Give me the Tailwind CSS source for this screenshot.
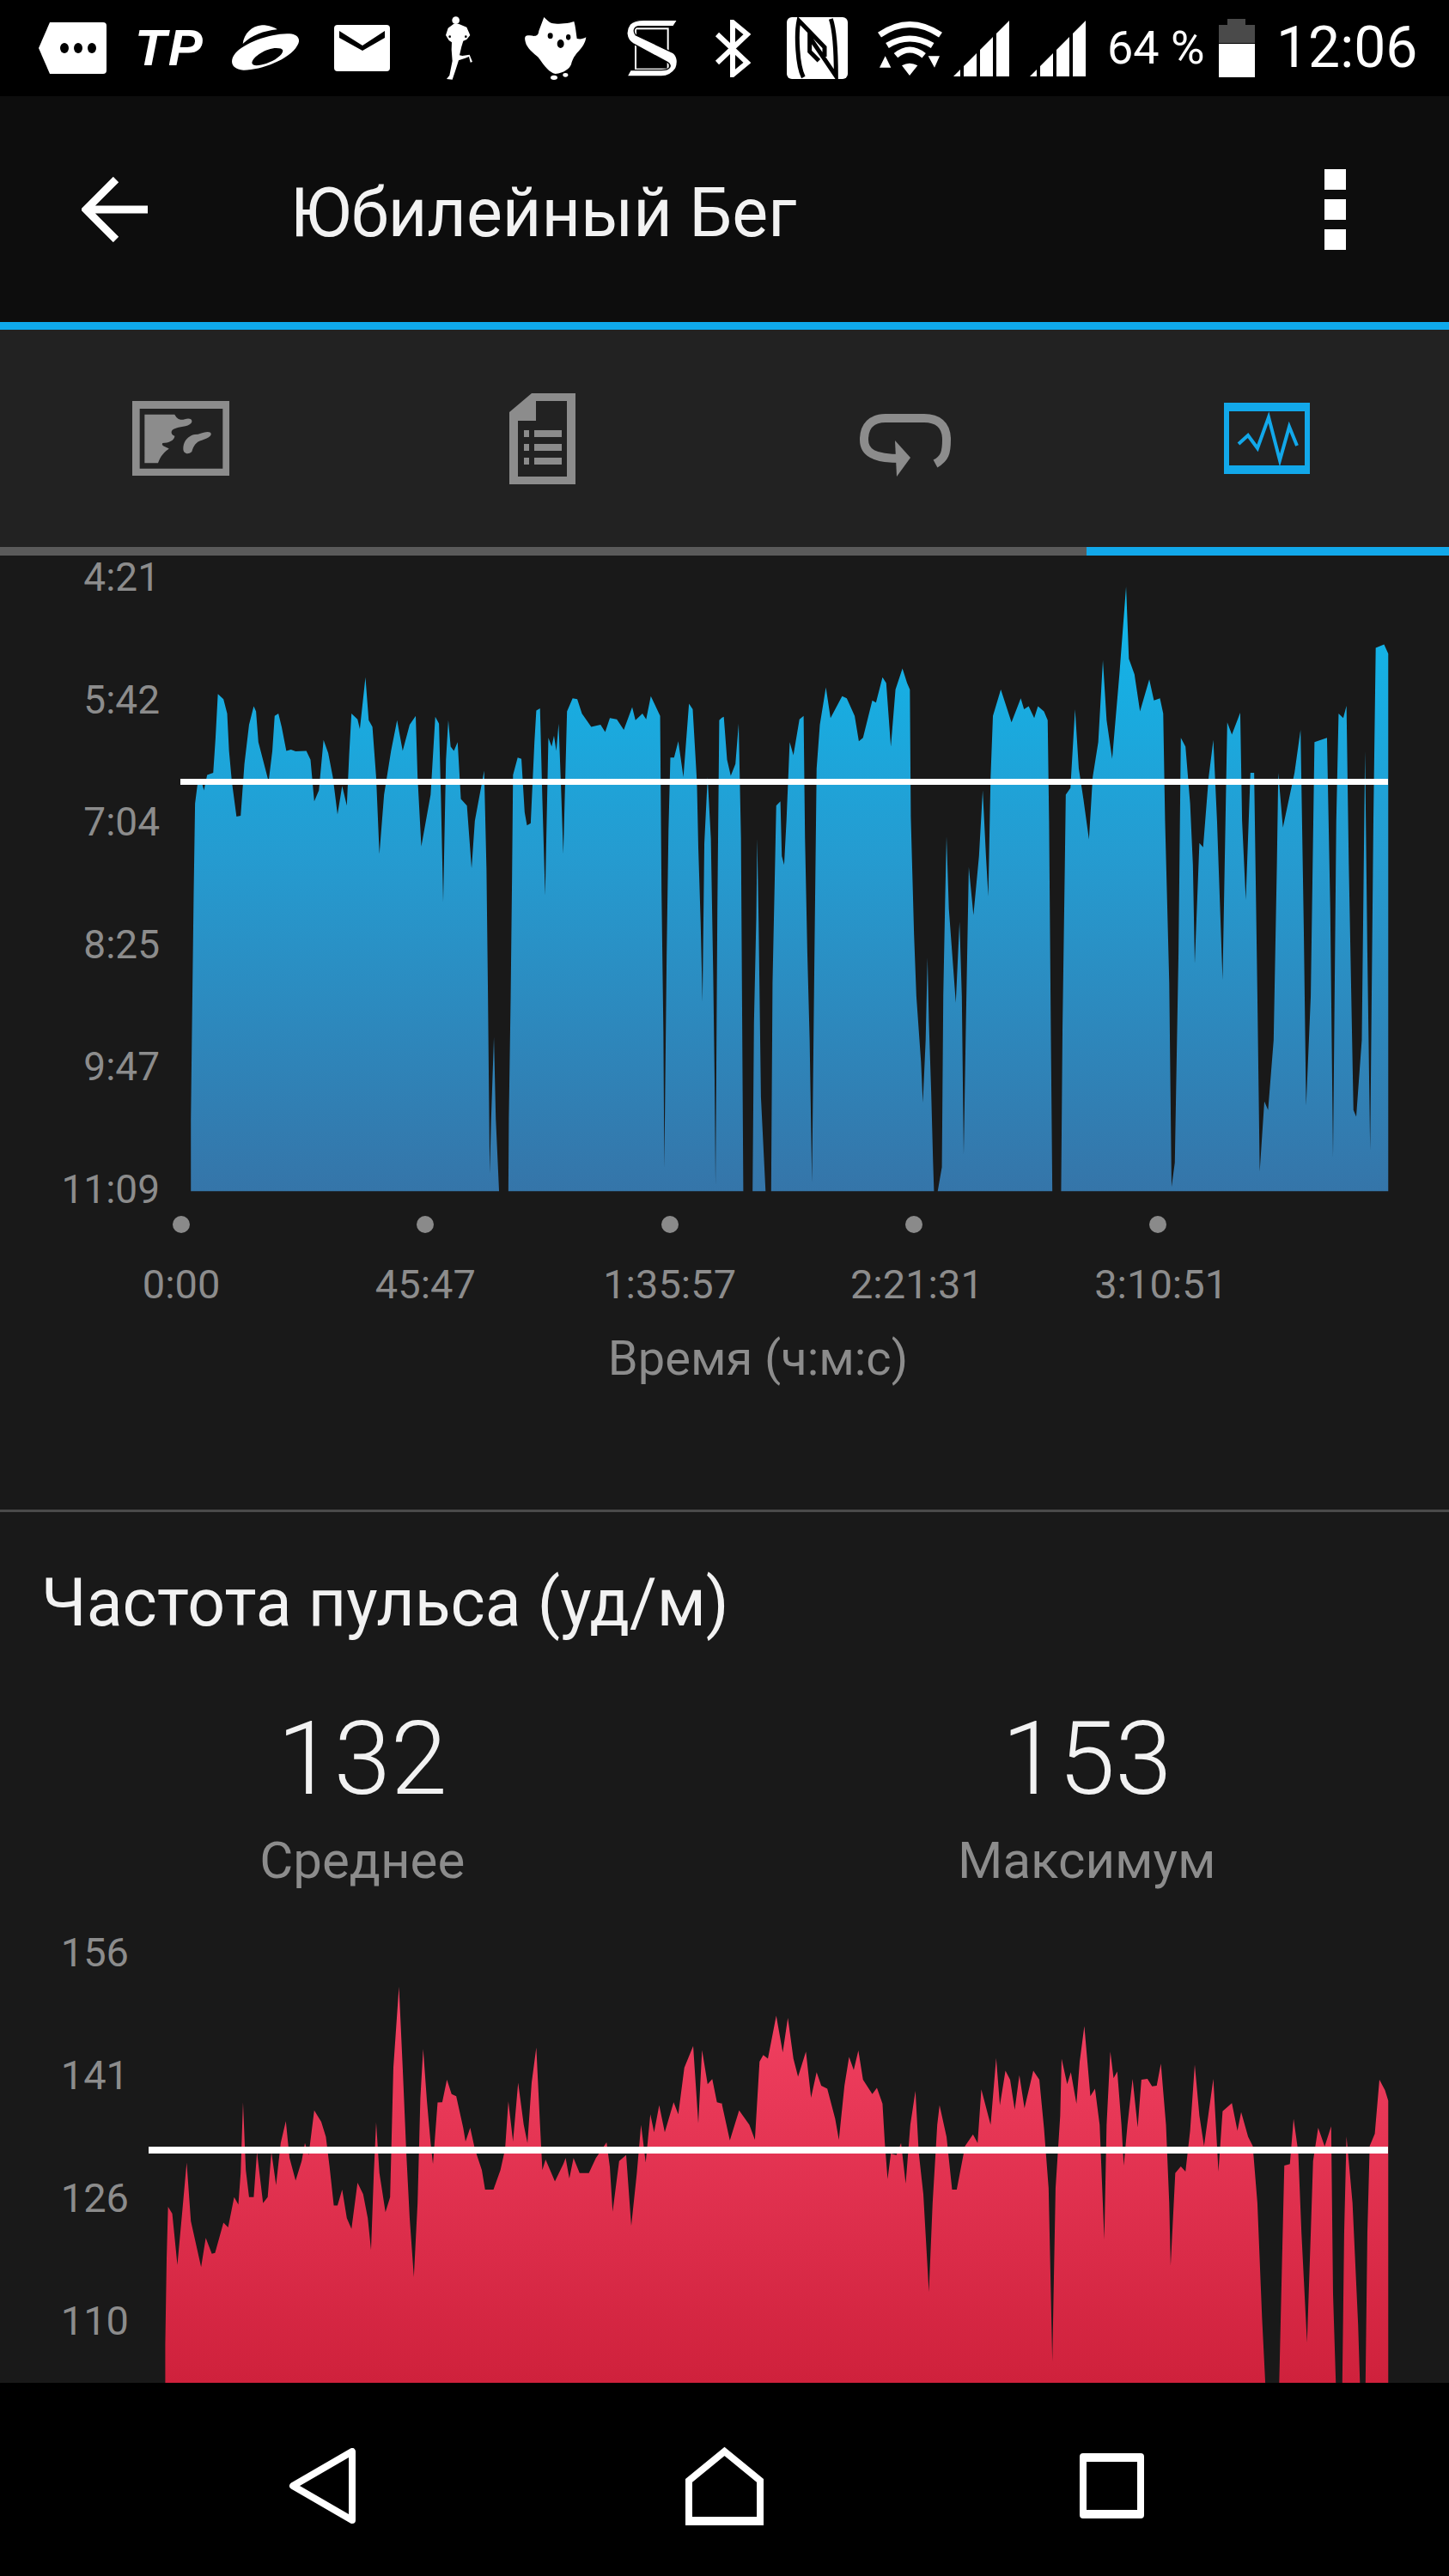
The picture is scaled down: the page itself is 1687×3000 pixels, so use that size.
<!DOCTYPE html>
<html lang="ru">
<head>
    <meta charset="UTF-8">
    <meta name="viewport" content="width=device-width, initial-scale=1.0">
    <title>Юбилейный Бег</title>
    <script src="https://cdn.jsdelivr.net/npm/@tailwindcss/browser@4"></script>
</head>
<body class="bg-black">
<div class="w-[1687px] h-[3000px] overflow-hidden flex flex-col bg-[#191919] font-['Roboto',sans-serif]">

    <!-- Status bar -->
    <div class="h-[112px] shrink-0 bg-black flex items-center pl-[45px] text-white">
        <svg width="79" height="60" viewBox="0 0 79 60"><path d="M13 0H75a4 4 0 0 1 4 4V56a4 4 0 0 1-4 4H13L0 30Z" fill="#fff"/><ellipse cx="30" cy="30" rx="5" ry="6"/><ellipse cx="46" cy="30" rx="5" ry="6"/><ellipse cx="62" cy="30" rx="5" ry="6"/></svg>
        <span class="ml-[33px] w-[79px] text-[60px] leading-none font-bold italic font-['Liberation_Sans',sans-serif] tracking-[2px]">TP</span>
        <svg class="ml-[34px]" width="78" height="54" viewBox="30 39 234 162" fill="#fff"><path d="M68 105C72 70 100 42 135 40 160 40 180 48 188 55 140 60 100 75 68 105Z"/><path fill-rule="evenodd" d="M232 70C262 72 272 92 258 112 232 160 130 198 70 197 28 194 20 165 42 138 72 102 170 66 232 70ZM185 120C150 120 102 150 100 172 102 186 130 180 150 174 180 165 210 142 208 128 206 122 198 120 185 120Z"/></svg>
        <svg class="ml-[41px]" width="65" height="54" viewBox="0 0 65 54"><rect width="65" height="54" rx="4" fill="#fff"/><path d="M6 7 33 24 59 7V15L33 30 6 15Z"/></svg>
        <svg class="ml-[64px]" width="32" height="75" viewBox="24 24 96 225" fill="#fff"><circle cx="62" cy="38" r="13"/><path d="M55 50H70L75 52 100 62 112 90 100 105 88 110 82 130 75 160 85 162 110 158 120 183 113 185 108 165 95 170 72 178 60 215 50 245 30 243 40 230 50 180 47 140 48 115 38 108 27 90 35 65Z"/><circle cx="41" cy="95" r="4" fill="#000"/><circle cx="97" cy="95" r="4" fill="#000"/></svg>
        <svg class="ml-[60px]" width="73" height="73" viewBox="300 30 219 219" fill="#fff"><path d="M370 30C378 38 388 48 395 50 410 54 428 54 440 52 455 52 465 48 475 45 480 62 482 85 485 105 497 108 507 106 517 100 515 118 505 135 490 150 478 163 470 175 465 195 458 212 440 224 410 228 388 222 375 205 350 170 335 156 318 145 308 125 302 108 298 90 320 94 335 96 350 100 352 78 358 50 370 30Z"/><ellipse cx="392" cy="95" rx="9" ry="10" fill="#000"/><ellipse cx="455" cy="100" rx="8" ry="10" fill="#000"/><ellipse cx="428" cy="123" rx="12" ry="15" fill="#000"/><ellipse cx="405" cy="241" rx="12" ry="8"/><ellipse cx="445" cy="232" rx="9" ry="7"/></svg>
        <svg class="ml-[46px]" width="60" height="66" viewBox="657 39 180 198" fill="#fff"><rect x="690" y="70" width="113" height="142" fill="none" stroke="#fff" stroke-width="6"/><path d="M836 40 822 62H700C685 64 680 78 690 92L822 155C838 168 838 192 830 210 815 232 800 237 780 237H660L672 215H780C812 215 818 198 802 188L680 122C655 105 655 75 670 55 680 44 695 40 720 40Z" stroke="#000" stroke-width="4"/></svg>
        <svg class="ml-[43px]" width="42" height="67" viewBox="0 0 42 67" fill="none" stroke="#fff" stroke-width="6"><path d="M3 17 38 50 21 64V3L38 17 3 50"/></svg>
        <svg class="ml-[42px]" width="71" height="72" viewBox="18 30 213 216"><rect x="18" y="30" width="213" height="216" rx="18" fill="#fff"/><path d="M76 240C55 200 50 90 60 42L150 135V168M172 36C190 90 190 190 190 236L98 100V150L130 182" fill="none" stroke="#000" stroke-width="15"/></svg>
        <svg class="ml-[34px]" width="78" height="66" viewBox="336 45 234 198" fill="#fff"><path d="M345 98Q450 25 558 98M372 135Q450 87 530 135M402 170Q450 130 500 170" fill="none" stroke="#fff" stroke-width="21"/><path d="M423 205Q450 190 478 205L450 240ZM345 212H385L365 172ZM515 172H555L537 212Z"/></svg>
        <svg class="ml-[11px]" width="65" height="66" viewBox="0 0 65 66" fill="#fff"><path d="M0 66 8 58V66ZM12 54 27 39V66H12ZM31 35 46 20V66H31ZM50 16 65 1V66H50Z"/></svg>
        <svg class="ml-[24px]" width="65" height="66" viewBox="0 0 65 66" fill="#fff"><path d="M0 66 8 58V66ZM12 54 27 39V66H12ZM31 35 46 20V66H31ZM50 16 65 1V66H50Z"/></svg>
        <span class="ml-[25px] w-[114px] text-[54px] leading-none whitespace-nowrap">64 %</span>
        <svg class="ml-[16px]" width="42" height="68" viewBox="0 0 42 68"><path d="M10 0H31V7H42V28H0V7H10Z" fill="#4a4a4a"/><rect y="29" width="42" height="39" fill="#fff"/></svg>
        <span class="ml-[25px] text-[66px] leading-none">12:06</span>
    </div>

    <!-- App bar -->
    <div class="h-[263px] shrink-0 bg-[#0d0d0d] flex items-center pl-[95px] text-[#f2f2f2]">
        <svg width="77" height="76" viewBox="0 0 77 76" fill="none" stroke="#fff" stroke-width="9"><path d="M77 38H8M40 3 5 38 40 73"/></svg>
        <h1 class="ml-[166px] w-[1204px] pt-[10px] text-[79px] leading-none whitespace-nowrap">Юбилейный Бег</h1>
        <div class="flex flex-col gap-[11px]">
            <div class="w-[25px] h-[24px] bg-white"></div>
            <div class="w-[25px] h-[24px] bg-white"></div>
            <div class="w-[25px] h-[24px] bg-white"></div>
        </div>
    </div>
    <div class="h-[9px] shrink-0 bg-[#0fa9ec]"></div>

    <!-- Tabs -->
    <div class="h-[253px] shrink-0 bg-[#222222] grid grid-cols-4">
        <div class="flex items-center pl-[154px]">
            <svg width="113" height="87" viewBox="42 48 339 261" fill="#8c8c8c"><path fill-rule="evenodd" d="M42 48H381V309H42ZM68 75V284H358V75Z"/><path d="M85 95H190C195 105 205 118 225 112 245 105 255 115 248 125 235 140 205 135 190 145 175 150 175 165 190 170 190 185 170 195 148 195 140 205 165 210 170 215 155 225 140 240 132 265H85ZM220 215C220 190 235 170 260 165 280 165 300 150 315 158 325 170 300 180 285 185 265 190 255 205 250 225 235 238 220 230 220 215Z"/></svg>
        </div>
        <div class="flex items-center pl-[171px]">
            <svg width="77" height="106" viewBox="0 0 77 106" fill="#8c8c8c"><path fill-rule="evenodd" d="M0 22 26 0H77V106H0ZM31 9V32H10V97H67V9Z"/><path d="M17 43h6v8h-6zM29 43h32v8H29zM17 59h6v8h-6zM29 59h32v8H29zM17 75h6v8h-6zM29 75h32v8H29z"/></svg>
        </div>
        <div class="flex items-center pl-[157px] pt-[16px]">
            <svg width="106" height="73" viewBox="0 0 106 73" fill="#8c8c8c"><path d="M88 58C99 52 101 45 101 30 101 12 90 5 75 5H30C14 5 5 14 5 30 5 45 16 52 48 52" fill="none" stroke="#8c8c8c" stroke-width="10"/><path d="M41 31 59 51 43 73Z"/></svg>
        </div>
        <div class="flex items-center pl-[160px]">
            <svg width="100" height="83" viewBox="0 0 100 83" fill="#12a8ea"><path fill-rule="evenodd" d="M0 0H100V83H0ZM6 10V73H94V10Z"/><path d="M17 48 28 38 39 53 52 17 65 67 76 28 85 50" fill="none" stroke="#12a8ea" stroke-width="4"/></svg>
        </div>
    </div>
    <div class="h-[10px] shrink-0 flex">
        <div class="w-[1265px] bg-[#5a5a5a]"></div>
        <div class="flex-1 bg-[#12a8ea]"></div>
    </div>

    <!-- Pace chart -->
    <div class="h-[763px] shrink-0 flex text-[46px] leading-[50px] text-[#8c8c8c]">
        <div class="w-[186px] shrink-0 flex flex-col justify-between items-end">
            <span>4:21</span><span>5:42</span><span>7:04</span><span>8:25</span><span>9:47</span><span>11:09</span>
        </div>
        <svg class="ml-[14px] shrink-0" width="1487" height="763" viewBox="200 647 1487 763">
            <defs>
                <linearGradient id="paceFill" gradientUnits="userSpaceOnUse" x1="0" y1="684" x2="0" y2="1387">
                    <stop offset="0" stop-color="#10b8ec"/>
                    <stop offset="0.45" stop-color="#259bd0"/>
                    <stop offset="1" stop-color="#3575a9"/>
                </linearGradient>
                <clipPath id="paceClip">
                    <path transform="matrix(.542 0 0 .5102 0 650)" d="M410 1445 410 1280 413 1020 416 770 419 560 425 510 432 505 438 530 445 495 458 490 463 410 468 310 480 322 488 355 492 440 498 510 508 590 517 588 525 470 535 380 545 338 550 350 555 420 577 510 585 440 590 360 598 355 605 385 615 440 625 437 635 441 658 440 667 460 675 555 685 530 695 415 705 445 715 500 725 585 735 520 745 565 750 450 755 355 768 368 773 390 785 272 792 370 800 385 808 500 815 675 825 540 840 440 853 370 858 400 865 440 880 380 893 360 897 500 905 658 925 540 935 362 943 378 947 540 952 785 958 460 963 370 968 430 975 440 983 420 990 550 1003 565 1013 708 1020 600 1040 485 1045 710 1048 980 1052 1405 1055 1280 1061 1093 1065 1280 1072 1445 1092 1445 1093 1280 1097 1000 1100 720 1102 495 1112 455 1120 458 1127 580 1132 610 1140 605 1148 420 1152 348 1160 343 1165 550 1171 770 1178 410 1185 430 1190 405 1195 440 1200 378 1205 520 1210 675 1218 350 1230 320 1240 322 1250 355 1270 385 1290 380 1300 397 1310 365 1325 368 1340 392 1358 340 1365 370 1380 355 1388 368 1398 315 1418 360 1421 760 1425 1080 1427 1392 1432 910 1436 620 1440 455 1448 455 1457 418 1468 500 1480 332 1488 345 1497 510 1500 660 1505 830 1509 1012 1513 650 1520 500 1527 640 1532 950 1535 1190 1537 1432 1541 800 1545 370 1551 364 1551 1445Z"/>
                    <path transform="matrix(.5402 0 0 .5102 840 650)" d="M0 1445 0 365 5 362 12 460 20 497 30 470 37 378 42 640 47 1445 67 1445 70 1060 75 820 77 640 80 830 85 1230 95 1445 107 1445 110 970 115 720 118 565 127 555 130 680 135 700 140 600 147 420 155 450 168 368 177 360 180 640 185 900 190 1100 195 1425 200 940 205 480 212 380 225 295 235 365 260 315 270 320 287 360 296 418 305 410 325 325 333 330 347 272 355 285 365 430 375 300 390 252 400 285 406 300 408 590 415 860 420 1000 430 1150 434 1243 440 1100 444 912 447 1060 452 1220 456 1380 458 1445 466 1445 475 1390 478 1000 482 780 485 635 490 800 497 900 505 1015 513 830 518 1000 522 1362 527 1050 533 705 543 815 555 680 563 530 570 680 575 772 580 500 585 360 602 300 625 375 645 320 652 345 662 338 674 365 682 338 695 350 703 370 706 600 710 1100 713 1445 732 1445 735 1070 740 700 742 540 752 525 762 345 770 480 780 550 792 642 800 500 812 420 822 233 830 370 842 458 858 260 872 65 878 230 890 265 902 350 922 277 932 325 945 320 952 355 956 600 965 970 970 1435 977 1380 985 900 990 410 1000 430 1010 560 1016 700 1020 925 1030 650 1038 660 1050 500 1060 415 1068 600 1080 963 1090 375 1100 403 1118 353 1122 600 1130 780 1140 490 1148 490 1155 1000 1160 1400 1170 1240 1178 1260 1190 1100 1197 700 1200 490 1210 615 1235 490 1248 392 1255 850 1260 1250 1270 1000 1278 420 1305 410 1312 800 1318 1368 1325 600 1330 355 1340 365 1347 337 1352 700 1362 1260 1368 1275 1380 1100 1387 440 1392 900 1398 1352 1405 600 1410 205 1428 197 1437 218 1437 1445Z"/>
                </clipPath>
            </defs>
            <rect x="200" y="647" width="1487" height="763" fill="url(#paceFill)" clip-path="url(#paceClip)"/>
            <rect x="210" y="907" width="1406" height="7" fill="#fff"/>
        </svg>
    </div>

    <!-- Time axis -->
    <div class="shrink-0 pl-[69px] pt-[6px] grid grid-cols-[repeat(5,284.25px)] text-[47px] leading-[54px] text-[#8c8c8c]">
        <div class="flex flex-col items-center gap-[33px]"><div class="w-[20px] h-[20px] rounded-full bg-[#8a8a8a]"></div><span>0:00</span></div>
        <div class="flex flex-col items-center gap-[33px]"><div class="w-[20px] h-[20px] rounded-full bg-[#8a8a8a]"></div><span>45:47</span></div>
        <div class="flex flex-col items-center gap-[33px]"><div class="w-[20px] h-[20px] rounded-full bg-[#8a8a8a]"></div><span>1:35:57</span></div>
        <div class="flex flex-col items-center gap-[33px]"><div class="w-[20px] h-[20px] rounded-full bg-[#8a8a8a]"></div><span class="ml-[7px]">2:21:31</span></div>
        <div class="flex flex-col items-center gap-[33px]"><div class="w-[20px] h-[20px] rounded-full bg-[#8a8a8a]"></div><span class="ml-[7px]">3:10:51</span></div>
    </div>
    <p class="shrink-0 mt-[29px] text-center pl-[78px] text-[56px] leading-[60px] text-[#8c8c8c]">Время (ч:м:с)</p>

    <div class="shrink-0 mt-[146px] h-[3px] bg-[#4a4a4a]"></div>

    <!-- Heart rate -->
    <h2 class="shrink-0 mt-[66px] pl-[48px] text-[77px] leading-[80px] text-[#f2f2f2]">Частота пульса (уд/м)</h2>
    <div class="shrink-0 mt-[77px] grid grid-cols-2 text-center">
        <div>
            <div class="text-[119px] leading-[130px] font-light text-[#f2f2f2]">132</div>
            <div class="mt-[18px] text-[60px] leading-[70px] text-[#8c8c8c]">Среднее</div>
        </div>
        <div>
            <div class="text-[119px] leading-[130px] font-light text-[#f2f2f2]">153</div>
            <div class="mt-[18px] text-[60px] leading-[70px] text-[#8c8c8c]">Максимум</div>
        </div>
    </div>

    <div class="flex-1 min-h-0 flex overflow-hidden text-[47px] leading-[50px] text-[#8c8c8c]">
        <div class="w-[150px] shrink-0 pt-[47px] flex flex-col gap-[93px] items-end">
            <span>156</span><span>141</span><span>126</span><span>110</span>
        </div>
        <svg class="ml-[20px] shrink-0" width="1517" height="573" viewBox="170 2202 1517 573">
            <defs>
                <linearGradient id="heartFill" gradientUnits="userSpaceOnUse" x1="0" y1="2310" x2="0" y2="2775">
                    <stop offset="0" stop-color="#f34263"/>
                    <stop offset="1" stop-color="#cf213c"/>
                </linearGradient>
                <clipPath id="heartClip">
                    <path transform="matrix(.542 0 0 .3509 0 2250)" d="M355 1497 355 1370 358 1080 361 912 370 935 381 1105 392 920 401 765 410 960 432 1112 442 1015 455 1068 462 1065 480 965 490 980 503 880 512 905 517 800 522 565 528 790 535 880 545 880 552 730 565 900 575 880 583 730 593 840 603 700 614 628 622 750 635 825 648 760 655 700 663 740 675 592 690 630 700 680 708 780 717 908 725 908 735 855 745 950 755 985 768 832 780 870 790 950 797 1055 803 800 808 632 815 800 828 930 838 880 845 450 857 182 865 450 873 740 880 950 889 1145 897 900 903 550 909 388 917 560 925 700 930 770 940 566 950 565 960 490 970 538 980 545 995 650 1000 695 1010 650 1020 720 1035 790 1042 855 1060 855 1075 790 1085 720 1092 562 1102 695 1113 500 1125 640 1133 700 1142 500 1152 383 1160 640 1165 790 1172 755 1192 828 1210 770 1215 750 1223 818 1232 750 1245 800 1265 800 1280 750 1303 698 1310 780 1316 928 1330 760 1345 740 1356 975 1368 800 1377 640 1387 765 1397 605 1405 665 1416 575 1428 665 1447 565 1457 605 1470 450 1489 378 1500 635 1508 392 1520 505 1530 488 1540 565 1551 570 1551 1497Z"/>
                    <path transform="matrix(.5402 0 0 .3509 840 2250)" d="M0 1497 0 565 18 692 38 592 60 640 72 690 82 430 90 408 100 420 118 278 132 400 143 285 155 420 165 480 182 397 193 550 205 465 215 510 228 520 245 620 253 690 265 510 275 415 285 458 295 393 305 490 325 538 335 517 347 570 352 700 358 820 365 735 377 740 387 700 397 835 407 640 418 527 425 730 435 870 447 1195 455 900 465 640 470 575 485 680 497 855 507 855 525 710 542 672 552 700 560 522 580 640 592 418 600 575 612 460 622 490 632 590 642 475 653 585 672 460 685 490 695 650 705 850 713 1425 720 850 730 610 733 420 745 505 753 465 765 570 772 430 782 312 795 545 805 520 815 640 825 1020 830 640 838 397 845 485 853 463 862 640 867 775 875 640 886 487 897 648 905 490 918 487 928 512 938 510 947 437 958 640 965 900 968 1108 978 800 990 778 1000 795 1010 660 1020 440 1030 610 1040 710 1060 487 1071 795 1080 595 1100 568 1112 660 1120 598 1135 680 1145 710 1155 900 1165 1280 1172 1497 1202 1497 1208 1100 1213 775 1225 770 1233 620 1243 730 1250 1000 1262 1362 1270 1000 1275 760 1286 650 1300 712 1314 645 1318 1200 1324 1497 1338 1497 1342 1000 1347 678 1360 900 1372 1300 1376 1497 1388 1497 1392 1000 1397 710 1408 670 1418 490 1430 525 1437 560 1437 1497Z"/>
                </clipPath>
            </defs>
            <rect x="170" y="2202" width="1517" height="573" fill="url(#heartFill)" clip-path="url(#heartClip)"/>
            <rect x="173" y="2500" width="1443" height="8" fill="#fff"/>
        </svg>
    </div>

    <!-- Navigation bar -->
    <div class="h-[225px] shrink-0 bg-black flex items-center pl-[336px] pt-[15px]">
        <svg width="78" height="88" viewBox="0 0 78 88" fill="none" stroke="#fff" stroke-width="8" stroke-linejoin="round"><path d="M74 4V84L5 44Z"/></svg>
        <svg class="ml-[384px]" width="91" height="92" viewBox="0 0 91 92" fill="none" stroke="#fff" stroke-width="8"><path d="M4 86V40L45.500 6 87 40V86Z"/><rect x="0" y="83" width="91" height="9" fill="#fff" stroke="none"/></svg>
        <svg class="ml-[368px]" width="75" height="76" viewBox="0 0 75 76"><path fill-rule="evenodd" d="M4 0H71a4 4 0 0 1 4 4V72a4 4 0 0 1-4 4H4a4 4 0 0 1-4-4V4A4 4 0 0 1 4 0ZM8 10V66H67V10Z" fill="#fff"/></svg>
    </div>
</div>
</body>
</html>
